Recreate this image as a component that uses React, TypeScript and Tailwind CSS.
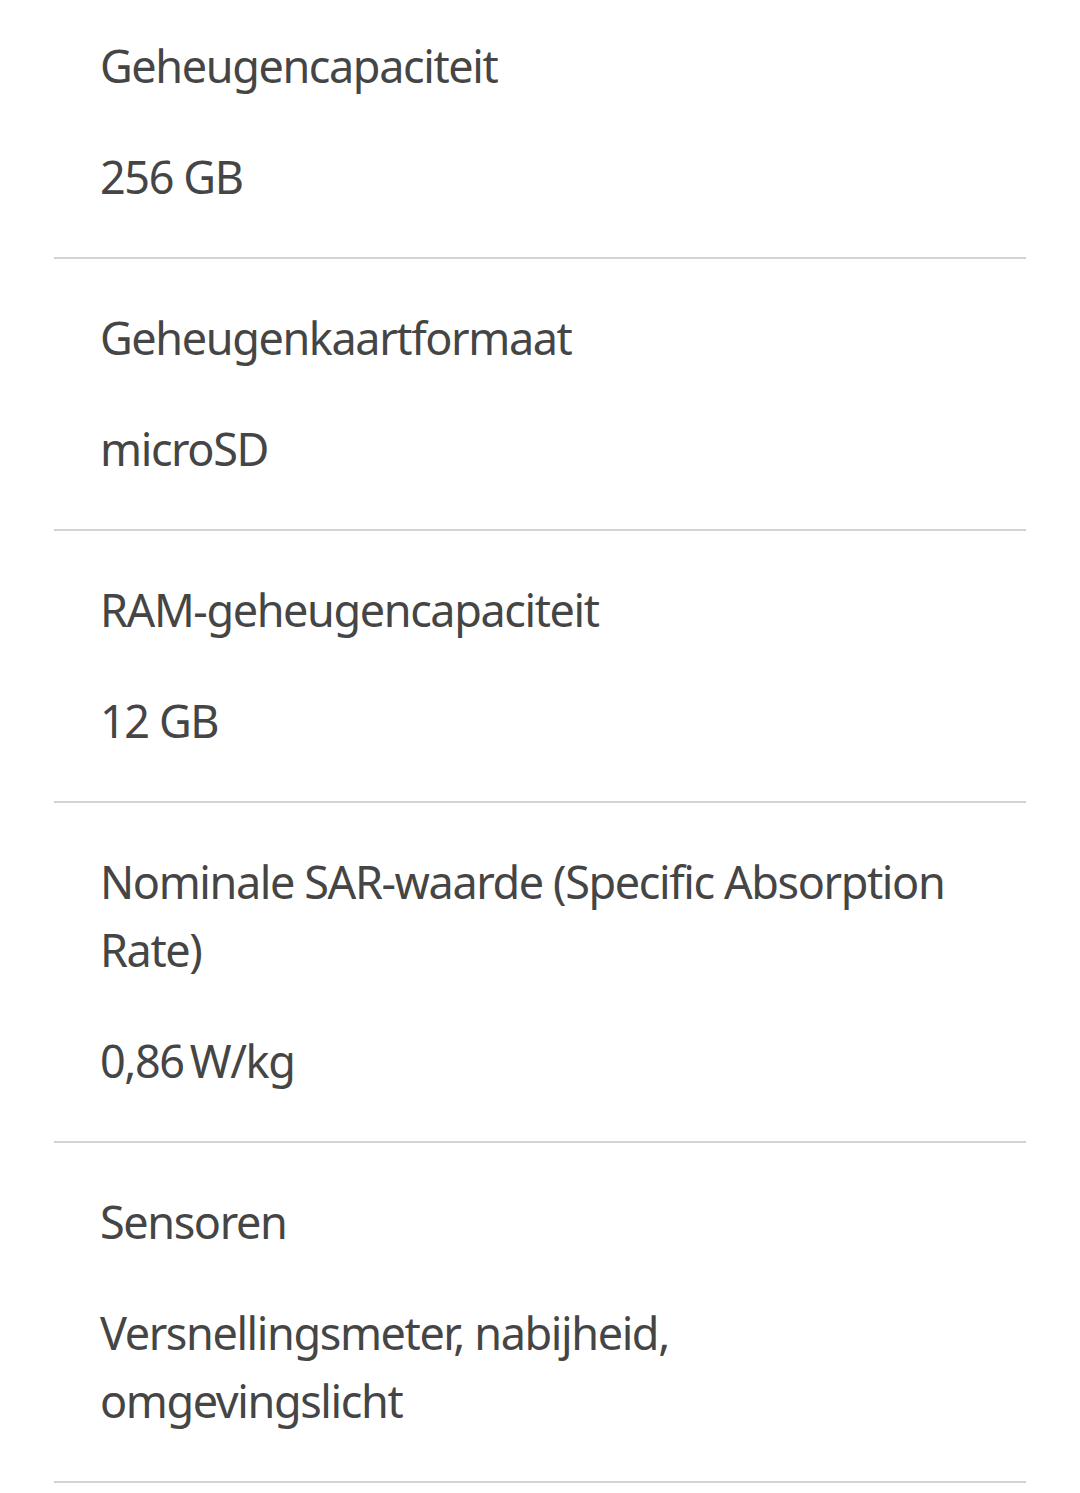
import React from "react";

interface SpecRow {
  label: string;
  value: string;
}

const specs: SpecRow[] = [
  { label: "Geheugencapaciteit", value: "256 GB" },
  { label: "Geheugenkaartformaat", value: "microSD" },
  { label: "RAM-geheugencapaciteit", value: "12 GB" },
  {
    label: "Nominale SAR-waarde (Specific Absorption Rate)",
    value: "0,86\u2009W/kg",
  },
  { label: "Sensoren", value: "Versnellingsmeter, nabijheid, omgevingslicht" },
];

const App = () => {
  return (
    <div
      className="min-h-[1493px] bg-white text-[#454545]"
      style={{ fontFamily: '"Noto Sans", sans-serif' }}
    >
      <div className="mx-[54px] w-[972px]">
        {specs.map((row, index) => (
          <div
            key={index}
            className={`flex flex-col gap-[43px] border-b-2 border-[#d4d4d4] pl-[46px] pr-[60px] ${
              index === 0 ? "pt-[32px] pb-[46px]" : "pt-[45px] pb-[46px]"
            }`}
          >
            <div className="text-[45px] leading-[68px] tracking-[-1.4px]">{row.label}</div>
            <div className="text-[45px] leading-[68px] tracking-[-1.4px]">{row.value}</div>
          </div>
        ))}
      </div>
    </div>
  );
};

export default App;
